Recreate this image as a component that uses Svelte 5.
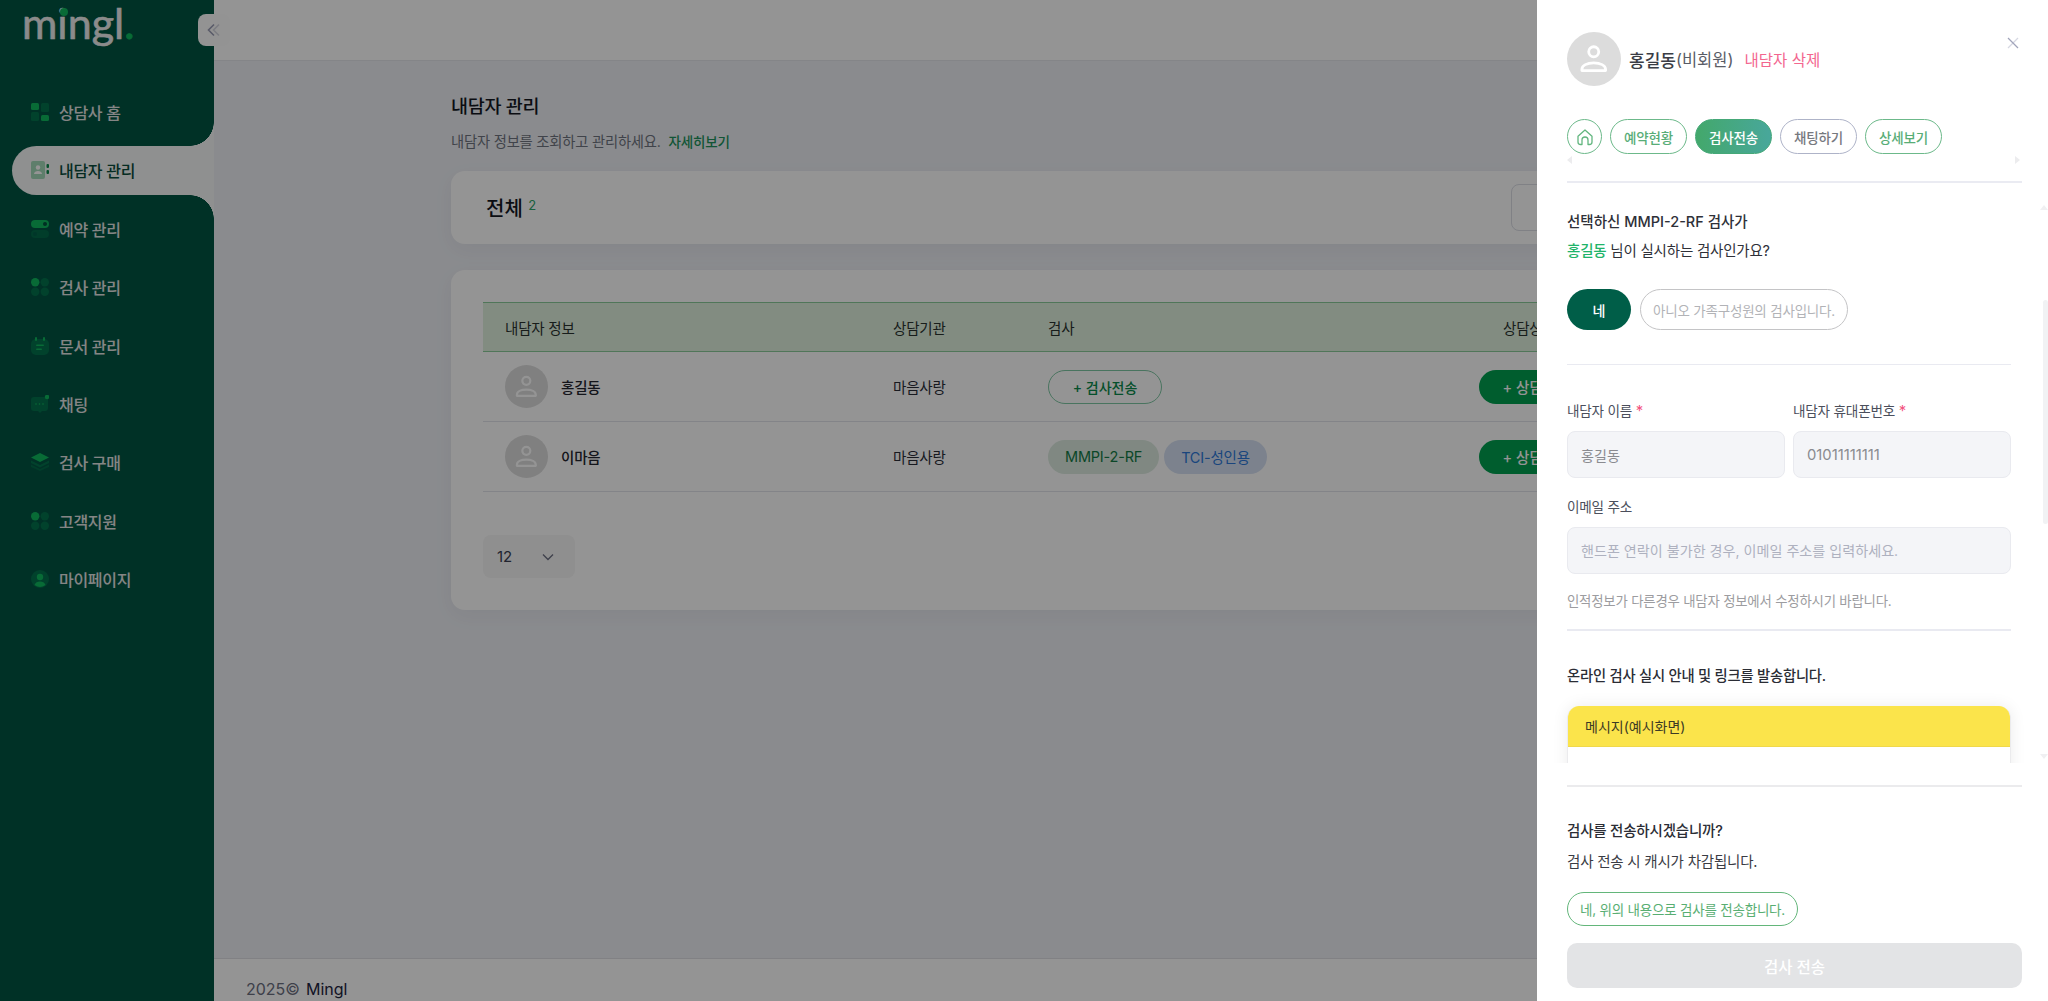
<script lang="ts">
	const b = '#0eb85e';
	const d = '#03724c';

	const nav = [
		{ label: '상담사 홈', icon: `<rect x="0" y="0" width="8" height="7" rx="1.5" fill="${b}"/><rect x="10" y="0" width="8" height="9" rx="1.5" fill="${d}"/><rect x="0" y="9" width="8" height="9" rx="1.5" fill="${d}"/><rect x="10" y="12" width="8" height="6" rx="1.5" fill="${b}"/>` },
		{ label: '내담자 관리', active: true, icon: `<rect x="0" y="0" width="14" height="18" rx="2" fill="#a3d9b8"/><circle cx="7" cy="6.5" r="2.2" fill="#fff"/><path d="M3 13c0-2 2-3 4-3s4 1 4 3z" fill="#fff"/><rect x="15.5" y="3" width="2.5" height="4" rx="1" fill="#0a8a4a"/><rect x="15.5" y="9" width="2.5" height="4" rx="1" fill="#0a8a4a"/>` },
		{ label: '예약 관리', icon: `<rect x="0" y="0" width="18" height="8" rx="4" fill="${b}"/><circle cx="14" cy="4" r="2" fill="#00513d"/><rect x="0" y="10" width="18" height="8" rx="4" fill="${d}" opacity=".7"/><circle cx="4" cy="14" r="2" fill="#005e48"/>` },
		{ label: '검사 관리', icon: `<circle cx="4.2" cy="4.2" r="4.2" fill="${b}"/><circle cx="13.8" cy="4.2" r="4.2" fill="${d}"/><circle cx="4.2" cy="13.8" r="4.2" fill="${d}"/><circle cx="13.8" cy="13.8" r="4.2" fill="${d}"/>` },
		{ label: '문서 관리', icon: `<rect x="0" y="2" width="18" height="16" rx="5" fill="${d}"/><rect x="4" y="0" width="2" height="4" rx="1" fill="${b}"/><rect x="12" y="0" width="2" height="4" rx="1" fill="${b}"/><rect x="5" y="7.5" width="8" height="1.6" rx=".8" fill="${b}"/><rect x="5" y="11.5" width="6" height="1.6" rx=".8" fill="${b}"/>` },
		{ label: '채팅', icon: `<path d="M3 2h11a3 3 0 0 1 3 3v8a3 3 0 0 1-3 3h-3l-2 2-2-2H3a3 3 0 0 1-3-3V5a3 3 0 0 1 3-3z" fill="${d}"/><circle cx="16" cy="2" r="2.2" fill="${b}"/><circle cx="5" cy="9" r=".8" fill="${b}"/><circle cx="8.5" cy="9" r=".8" fill="${b}"/><circle cx="12" cy="9" r=".8" fill="${b}"/>` },
		{ label: '검사 구매', icon: `<path d="M9 0l9 4.5-9 4.5-9-4.5z" fill="${b}"/><path d="M0 7.500l9 4.500 9-4.500v2.500L9 14.500 0 10z" fill="${d}"/><path d="M0 11.500L9 16l9-4.500V14l-9 4-9-4z" fill="${d}" opacity=".7"/>` },
		{ label: '고객지원', icon: `<circle cx="4.2" cy="4.2" r="4.2" fill="${b}"/><circle cx="13.800" cy="4.2" r="4.2" fill="${d}"/><circle cx="4.2" cy="13.800" r="4.2" fill="${d}"/><circle cx="13.800" cy="13.800" r="4.2" fill="${d}"/>` },
		{ label: '마이페이지', icon: `<circle cx="9" cy="9" r="9" fill="${d}"/><circle cx="9" cy="7" r="3.200" fill="${b}"/><path d="M3.500 15c.8-2.500 3-3.500 5.500-3.500s4.700 1 5.500 3.500a9 9 0 0 1-11 0z" fill="${b}"/>` }
	];

	const clients = [
		{ name: '홍길동', org: '마음사랑', tests: [] as { label: string; kind: string }[] },
		{
			name: '이마음',
			org: '마음사랑',
			tests: [
				{ label: 'MMPI-2-RF', kind: 'green' },
				{ label: 'TCI-성인용', kind: 'blue' }
			]
		}
	];

	const tabs = [
		{ label: '예약현황', cls: '' },
		{ label: '검사전송', cls: 'on' },
		{ label: '채팅하기', cls: 'muted' },
		{ label: '상세보기', cls: '' }
	];
</script>

{#snippet person(size: number)}
	<span class="avatar" style="width:{size}px;height:{size}px">
		<svg width={size * 0.62} height={size * 0.62} viewBox="0 0 24 24" fill="none" stroke="#fff" stroke-width="2">
			<circle cx="12" cy="7" r="3.600" />
			<path d="M3.500 20.500v-.8c0-3 3.800-4.700 8.500-4.700s8.500 1.700 8.500 4.700v.8z" stroke-linejoin="round" />
		</svg>
	</span>
{/snippet}

<div class="app">
	<aside class="sidebar">
		<div class="logo">
			<span class="logo-text">mingl<span class="logo-dot">.</span></span>
			<span class="i-dot"></span>
		</div>
		<ul class="nav">
			{#each nav as item}
				<li class="nav-item" class:active={item.active}>
					<svg width="18" height="18" viewBox="0 0 18 18">{@html item.icon}</svg>
					<span>{item.label}</span>
				</li>
			{/each}
		</ul>
	</aside>

	<div class="main">
		<header class="topbar"></header>
		<main class="content">
			<div class="inner">
				<h1>내담자 관리</h1>
				<p class="sub">내담자 정보를 조회하고 관리하세요. <a href="#top">자세히보기</a></p>

				<section class="card total">
					<h2>전체 <sup>2</sup></h2>
					<div class="search"></div>
				</section>

				<section class="card list">
					<div class="row head">
						<div class="cell-name">내담자 정보</div>
						<div>상담기관</div>
						<div>검사</div>
						<div class="cell-state">상담상태</div>
					</div>
					{#each clients as c}
						<div class="row">
							<div class="cell-name user">
								{@render person(43)}
								<strong>{c.name}</strong>
							</div>
							<div>{c.org}</div>
							<div class="tests">
								{#if c.tests.length === 0}
									<button class="send">+ 검사전송</button>
								{:else}
									{#each c.tests as t}
										<span class="tag {t.kind}">{t.label}</span>
									{/each}
								{/if}
							</div>
							<div><button class="reserve">+ 상담예약</button></div>
						</div>
					{/each}
					<div class="pager">
						<span>12</span>
						<svg width="14" height="14" viewBox="0 0 14 14" fill="none" stroke="#6f7285" stroke-width="1.400"><path d="M2 4.500l5 5 5-5" /></svg>
					</div>
				</section>
			</div>
		</main>
		<footer class="foot"><span>2025©</span> <b>Mingl</b></footer>
	</div>

	<button class="collapse" aria-label="메뉴 접기">
		<svg width="16" height="16" viewBox="0 0 16 16" fill="none" stroke="#9a9db5" stroke-width="1.600">
			<path d="M13 2.500L7.500 8 13 13.500" stroke="#d5d7e0" />
			<path d="M8 2.500L2.500 8 8 13.500" />
		</svg>
	</button>
</div>

<div class="scrim"></div>

<aside class="drawer">
	<div class="drawer-head">
		<div class="who">
			{@render person(54)}
			<span class="who-name">홍길동</span><span class="who-type">(비회원)</span>
			<a class="who-del" href="#top">내담자 삭제</a>
			<button class="close" aria-label="닫기">
				<svg width="12" height="12" viewBox="0 0 12 12" stroke-width="1.300"><path d="M11 1L1 11" stroke="#d6d8e2" /><path d="M1 1l10 10" stroke="#a0a4ba" /></svg>
			</button>
		</div>
		<div class="tabs">
			<button class="tab home" aria-label="홈">
				<svg width="18" height="18" viewBox="0 0 18 18" fill="none" stroke="#62b67f" stroke-width="1.300" stroke-linejoin="round">
					<path d="M2 8.200L9 2l7 6.200V14a2.500 2.500 0 0 1-2.500 2.500H12V12a3 3 0 0 0-6 0v4.500H4.500A2.500 2.500 0 0 1 2 14z" />
				</svg>
			</button>
			{#each tabs as t}
				<button class="tab {t.cls}">{t.label}</button>
			{/each}
			<i class="arrow left"></i>
			<i class="arrow right"></i>
		</div>
	</div>

	<div class="scroll">
		<p class="q">선택하신 MMPI-2-RF 검사가</p>
		<p class="q second"><em>홍길동</em> 님이 실시하는 검사인가요?</p>
		<div class="choice">
			<button class="yes">네</button>
			<button class="no">아니오 가족구성원의 검사입니다.</button>
		</div>
		<hr class="thin" />
		<div class="fields">
			<label>
				<span>내담자 이름 <i>*</i></span>
				<input value="홍길동" readonly />
			</label>
			<label>
				<span>내담자 휴대폰번호 <i>*</i></span>
				<input class="num" value="01011111111" readonly />
			</label>
			<label class="wide">
				<span>이메일 주소</span>
				<input placeholder="핸드폰 연락이 불가한 경우, 이메일 주소를 입력하세요." />
			</label>
		</div>
		<p class="hint">인적정보가 다른경우 내담자 정보에서 수정하시기 바랍니다.</p>
		<hr class="thick" />
		<p class="notice">온라인 검사 실시 안내 및 링크를 발송합니다.</p>
		<div class="message">
			<div class="message-head">메시지(예시화면)</div>
			<div class="message-body"></div>
		</div>
		<div class="vbar"><i></i></div>
		<i class="v-arrow up"></i>
		<i class="v-arrow down"></i>
	</div>

	<div class="confirm">
		<p class="c-title">검사를 전송하시겠습니까?</p>
		<p class="c-sub">검사 전송 시 캐시가 차감됩니다.</p>
		<button class="agree">네, 위의 내용으로 검사를 전송합니다.</button>
		<button class="submit">검사 전송</button>
	</div>
</aside>

<style>
	:global(body) {
		margin: 0;
		font-family: Inter, 'Noto Sans CJK KR', sans-serif;
		color: #1f2433;
		overflow: hidden;
	}

	button {
		font-family: inherit;
		cursor: pointer;
	}

	p {
		margin: 0;
	}

	a {
		text-decoration: none;
	}

	.app {
		display: flex;
		height: 1001px;
		background: #eef0f5;
		position: relative;
		overflow: hidden;
	}

	/* sidebar */
	.sidebar {
		width: 214px;
		flex: none;
		background: #005543;
	}

	.logo {
		position: relative;
		height: 87.500px;
		padding-left: 22px;
	}

	.logo-text {
		display: block;
		font-family: Lato, sans-serif;
		font-size: 43px;
		line-height: 45px;
		-webkit-text-stroke: 0.6px #f0f0f0;
		color: #f0f0f0;
	}

	.logo-dot {
		color: #0eb85e;
		-webkit-text-stroke: 1px #0eb85e;
	}

	.i-dot {
		position: absolute;
		left: 60px;
		top: 8px;
		width: 8px;
		height: 8px;
		border-radius: 50%;
		background: #0eb85e;
	}

	.nav {
		list-style: none;
		margin: 0;
		padding: 0;
		display: flex;
		flex-direction: column;
		gap: 9.400px;
	}

	.nav-item {
		position: relative;
		height: 49px;
		margin-left: 12px;
		padding-left: 19px;
		display: flex;
		align-items: center;
		gap: 10px;
		font-size: 16px;
		font-weight: 500;
		letter-spacing: -0.3px;
		color: #e6e6e6;
	}

	.nav-item.active {
		background: #f7f8f8;
		border-radius: 25px 0 0 25px;
		color: #0a4d3c;
	}

	.nav-item.active::before,
	.nav-item.active::after {
		content: '';
		position: absolute;
		right: 0;
		width: 24px;
		height: 24px;
	}

	.nav-item.active::before {
		top: -24px;
		background: radial-gradient(circle at 0 0, transparent 23.500px, #f7f8f8 24px);
	}

	.nav-item.active::after {
		bottom: -24px;
		background: radial-gradient(circle at 0 100%, transparent 23.500px, #f7f8f8 24px);
	}

	.collapse {
		position: absolute;
		left: 198px;
		top: 14px;
		width: 32px;
		height: 32px;
		padding: 0;
		display: flex;
		align-items: center;
		justify-content: center;
		border: none;
		border-radius: 8px;
		background: #fdfdfd;
	}

	/* main */
	.main {
		flex: 1;
		min-width: 0;
		display: flex;
		flex-direction: column;
	}

	.topbar {
		height: 60px;
		flex: none;
		background: #fff;
		border-bottom: 1px solid #e4e5ea;
	}

	.content {
		flex: 1;
		padding: 32px 237px 0;
		background: #eef0f5;
	}

	.inner {
		width: 1360px;
	}

	h1 {
		margin: 0;
		font-size: 18.500px;
		line-height: 26px;
		font-weight: 500;
		letter-spacing: -0.3px;
		color: #14181f;
	}

	.sub {
		margin-top: 13px;
		font-size: 14.300px;
		line-height: 20px;
		letter-spacing: -0.2px;
		color: #6f7480;
	}

	.sub a {
		margin-left: 4px;
		color: #20935c;
		font-weight: 500;
		font-size: 13.500px;
	}

	.card {
		background: #fff;
		border-radius: 14px;
		box-shadow: 0 6px 20px rgba(30, 40, 70, 0.05);
	}

	.total {
		margin-top: 19px;
		height: 73px;
		display: flex;
		align-items: center;
		justify-content: space-between;
		padding: 0 35px;
	}

	h2 {
		margin: 0;
		font-size: 20px;
		font-weight: 500;
		color: #14181f;
	}

	h2 sup {
		font-size: 13px;
		font-weight: 400;
		color: #2ea56a;
		vertical-align: 6px;
		line-height: 0;
	}

	.search {
		width: 265px;
		height: 47px;
		border: 1px solid #dcdee6;
		border-radius: 8px;
		box-sizing: border-box;
	}

	.list {
		margin-top: 26px;
		height: 340px;
		box-sizing: border-box;
		padding: 32px 32px 0;
	}

	.row {
		display: grid;
		grid-template-columns: 410px 155px 431px 1fr;
		align-items: center;
		height: 70px;
		border-bottom: 1px solid #e2e4ea;
		box-sizing: border-box;
		font-size: 14.500px;
		letter-spacing: -0.2px;
		color: #2a2d38;
	}

	.row.head {
		height: 50px;
		background: #e1f2df;
		border-top: 1px solid #8bcb9a;
		border-bottom: 1px solid #8bcb9a;
		color: #2a3330;
	}

	.head .cell-name {
		padding-left: 22px;
	}

	.cell-state {
		padding-left: 24px;
	}

	.user {
		display: flex;
		align-items: center;
		gap: 13px;
		padding-left: 22px;
	}

	.user strong {
		font-weight: 500;
		color: #23252f;
	}

	.avatar {
		display: inline-flex;
		align-items: center;
		justify-content: center;
		flex: none;
		border-radius: 50%;
		background: #dcdcdc;
	}

	.tests {
		display: flex;
		gap: 5px;
	}

	.send {
		width: 114px;
		height: 34px;
		padding: 0;
		border: 1px solid #7fc8a4;
		border-radius: 17px;
		background: #fff;
		color: #0a8a4a;
		font-size: 14px;
		font-weight: 500;
	}

	.tag {
		height: 34px;
		padding: 0 17px;
		display: inline-flex;
		align-items: center;
		border-radius: 17px;
		font-size: 14.500px;
	}

	.tag.green {
		background: #dcebe0;
		color: #137a45;
	}

	.tag.blue {
		background: #d6e1f3;
		color: #2d78d8;
	}

	.reserve {
		width: 114px;
		height: 34px;
		border: none;
		border-radius: 17px;
		background: #00a050;
		color: #fff;
		font-size: 14.500px;
		font-weight: 500;
		padding: 0;
	}

	.pager {
		margin-top: 43px;
		width: 92px;
		height: 43px;
		box-sizing: border-box;
		padding: 0 20px 0 14px;
		display: flex;
		align-items: center;
		justify-content: space-between;
		background: #f6f6f6;
		border-radius: 8px;
		font-size: 15px;
		color: #3c3f52;
	}

	.foot {
		height: 43px;
		flex: none;
		box-sizing: border-box;
		padding: 0 0 1px 32px;
		display: flex;
		align-items: flex-end;
		gap: 6px;
		background: #fff;
		border-top: 1px solid #dedfe3;
		font-size: 16px;
		line-height: 22px;
		color: #6b6e80;
	}

	.foot b {
		font-weight: 400;
		color: #1c2440;
	}

	.scrim {
		position: fixed;
		inset: 0;
		background: rgba(0, 0, 0, 0.42);
	}

	/* drawer */
	.drawer {
		position: fixed;
		top: 0;
		right: 0;
		bottom: 0;
		width: 511px;
		display: flex;
		flex-direction: column;
		background: #fff;
	}

	.drawer-head {
		flex: none;
		height: 190px;
		box-sizing: border-box;
		padding: 32px 26px 0 30px;
		position: relative;
	}

	.drawer-head::after {
		content: '';
		position: absolute;
		left: 30px;
		right: 26px;
		top: 181px;
		height: 2px;
		background: #eaebf2;
	}

	.who {
		display: flex;
		align-items: center;
		height: 54px;
		position: relative;
	}

	.who-name {
		margin-left: 8px;
		font-size: 17px;
		font-weight: 500;
		color: #3a3d45;
	}

	.who-type {
		font-size: 16.500px;
		color: #595c66;
	}

	.who-del {
		margin-left: 11px;
		font-size: 15.500px;
		color: #f3668f;
	}

	.close {
		position: absolute;
		right: 3px;
		top: 5px;
		width: 12px;
		height: 12px;
		padding: 0;
		border: none;
		background: none;
		line-height: 0;
	}

	.tabs {
		position: relative;
		margin-top: 33px;
		display: flex;
		gap: 8px;
	}

	.tab {
		height: 35px;
		width: 77px;
		padding: 0;
		border: 1px solid #6cb98a;
		border-radius: 18px;
		background: #fff;
		color: #58ad77;
		font-size: 13.500px;
		font-weight: 500;
		letter-spacing: -0.2px;
	}

	.tab.home {
		width: 35px;
		display: flex;
		align-items: center;
		justify-content: center;
	}

	.tab.on {
		border-color: #45a878;
		background: linear-gradient(90deg, #43a86b, #48a79b);
		color: #fff;
	}

	.tab.muted {
		border-color: #aeb3c8;
		color: #77797f;
	}

	.arrow {
		position: absolute;
		top: 37px;
		border-top: 4px solid transparent;
		border-bottom: 4px solid transparent;
	}

	.arrow.left {
		left: 0;
		border-right: 5px solid #ececee;
	}

	.arrow.right {
		right: 2px;
		border-left: 5px solid #ececee;
	}

	.scroll {
		flex: 1;
		min-height: 0;
		overflow: hidden;
		position: relative;
		box-sizing: border-box;
		padding: 22px 37px 0 30px;
	}

	.q {
		font-size: 14.500px;
		line-height: 20px;
		font-weight: 500;
		color: #2e3038;
	}

	.q.second {
		margin-top: 9px;
		font-weight: 400;
		letter-spacing: -0.2px;
	}

	.q em {
		font-style: normal;
		font-weight: 500;
		color: #1fb46a;
	}

	.choice {
		margin-top: 28px;
		display: flex;
		gap: 9px;
	}

	.yes {
		width: 64px;
		height: 41px;
		border: none;
		border-radius: 21px;
		background: #005e48;
		color: #fff;
		font-size: 14px;
		font-weight: 500;
		padding: 0;
	}

	.no {
		width: 208px;
		height: 41px;
		padding: 0;
		border: 1px solid #c4c4c6;
		border-radius: 21px;
		background: #fff;
		color: #b2b3b7;
		font-size: 13.500px;
		letter-spacing: -0.2px;
	}

	hr {
		border: none;
		margin: 0;
		background: #e9eaf1;
	}

	hr.thin {
		height: 1px;
		margin-top: 34px;
	}

	.fields {
		margin-top: 36px;
		display: grid;
		grid-template-columns: 1fr 1fr;
		gap: 19px 8px;
	}

	.fields label {
		display: flex;
		flex-direction: column;
		gap: 10px;
		font-size: 13.600px;
		line-height: 20px;
		letter-spacing: -0.2px;
		color: #4b4f5c;
	}

	.fields .wide {
		grid-column: 1 / -1;
	}

	.fields i {
		font-style: normal;
		font-size: 15px;
		color: #f3537f;
	}

	input {
		width: 100%;
		height: 47px;
		box-sizing: border-box;
		padding: 0 13px;
		border: 1px solid #e9eaef;
		border-radius: 8px;
		background: #f4f5f8;
		font-family: inherit;
		font-size: 14.100px;
		color: #8a8b90;
		outline: none;
	}

	input.num {
		font-size: 14.800px;
	}

	input::placeholder {
		color: #aeb1bf;
	}

	.hint {
		margin-top: 17px;
		font-size: 13.400px;
		line-height: 20px;
		letter-spacing: -0.2px;
		color: #9c9ca0;
	}

	hr.thick {
		height: 2px;
		margin-top: 18px;
	}

	.notice {
		margin-top: 34px;
		font-size: 14.300px;
		line-height: 22px;
		font-weight: 500;
		letter-spacing: -0.2px;
		color: #2b2d35;
	}

	.message {
		margin-top: 19px;
		border-radius: 12px 12px 0 0;
		border: 1px solid #ebebed;
		border-top: none;
		box-shadow: 0 0 16px rgba(0, 0, 0, 0.08);
		overflow: hidden;
	}

	.message-head {
		height: 41px;
		box-sizing: border-box;
		padding-left: 17px;
		display: flex;
		align-items: center;
		background: #fbe44b;
		border-bottom: 1px solid #f0d84a;
		font-size: 14px;
		color: #3c3a25;
	}

	.message-body {
		height: 120px;
		background: #fff;
	}

	.vbar {
		position: absolute;
		top: 110px;
		right: 0;
		width: 5px;
		height: 224px;
	}

	.vbar i {
		display: block;
		height: 100%;
		border-radius: 3px;
		background: #f1f2f4;
	}

	.v-arrow {
		position: absolute;
		right: 0;
		border-left: 4px solid transparent;
		border-right: 4px solid transparent;
	}

	.v-arrow.up {
		top: 15px;
		border-bottom: 5px solid #f0f0f2;
	}

	.v-arrow.down {
		top: 564px;
		border-top: 5px solid #f0f0f2;
	}

	.confirm {
		flex: none;
		height: 216px;
		box-sizing: border-box;
		margin: 22px 26px 0 30px;
		padding-top: 33px;
		border-top: 2px solid #ebebed;
	}

	.c-title {
		font-size: 14.500px;
		line-height: 22px;
		font-weight: 500;
		letter-spacing: -0.2px;
		color: #2b2d35;
	}

	.c-sub {
		margin-top: 9px;
		font-size: 14.500px;
		line-height: 22px;
		letter-spacing: -0.2px;
		color: #3a3c44;
	}

	.agree {
		display: block;
		margin-top: 19px;
		width: 231px;
		height: 34px;
		padding: 0;
		border: 1px solid #63b67a;
		border-radius: 17px;
		background: #fff;
		color: #58ae72;
		font-size: 13.500px;
		letter-spacing: -0.2px;
	}

	.submit {
		display: block;
		margin-top: 17px;
		width: 100%;
		height: 45px;
		border: none;
		border-radius: 10px;
		background: #e3e4e6;
		color: #fff;
		font-size: 15.500px;
		font-weight: 500;
	}
</style>
